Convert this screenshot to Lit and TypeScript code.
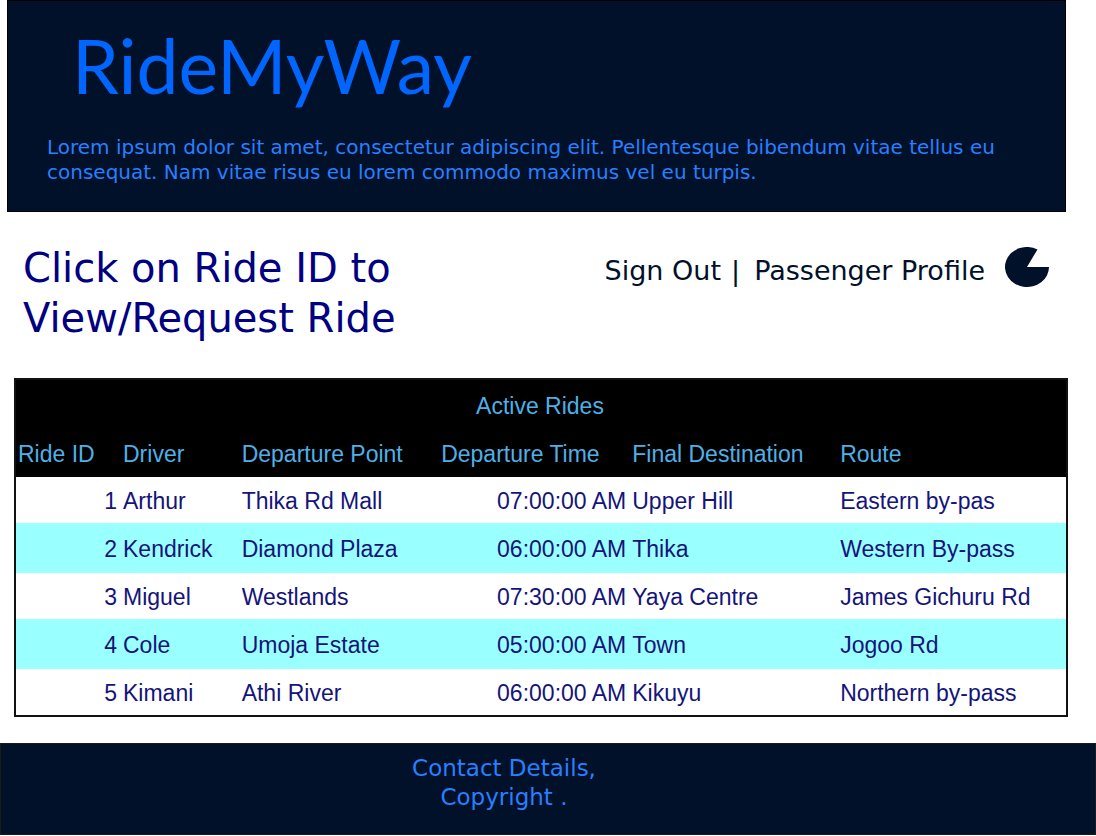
import { LitElement, html, css } from "lit";
import { customElement } from "lit/decorators.js";

interface Ride {
  id: number;
  driver: string;
  from: string;
  time: string;
  to: string;
  route: string;
}

const rides: Ride[] = [
  { id: 1, driver: "Arthur", from: "Thika Rd Mall", time: "07:00:00 AM", to: "Upper Hill", route: "Eastern by-pas" },
  { id: 2, driver: "Kendrick", from: "Diamond Plaza", time: "06:00:00 AM", to: "Thika", route: "Western By-pass" },
  { id: 3, driver: "Miguel", from: "Westlands", time: "07:30:00 AM", to: "Yaya Centre", route: "James Gichuru Rd" },
  { id: 4, driver: "Cole", from: "Umoja Estate", time: "05:00:00 AM", to: "Town", route: "Jogoo Rd" },
  { id: 5, driver: "Kimani", from: "Athi River", time: "06:00:00 AM", to: "Kikuyu", route: "Northern by-pass" },
];

@customElement("rides-table")
export class RidesTable extends LitElement {
  static styles = css`
    :host {
      display: block;
    }
    .rides {
      width: 100%;
      table-layout: fixed;
      border-collapse: separate;
      border-spacing: 0;
      border: 2px solid #111;
      font: 23px/32px "Liberation Sans", Arial, sans-serif;
      color: #14147a;
    }
    .c-id { width: 10%; }
    .c-driver { width: 11.3%; }
    .c-from { width: 19%; }
    .c-time { width: 18.2%; }
    .c-to { width: 19.8%; }
    .head {
      background: #000;
      color: #4fb0e6;
    }
    th,
    td {
      padding: 2px 4px 0 2px;
      font-weight: 400;
      text-align: left;
      white-space: nowrap;
    }
    .head tr { height: 48px; }
    .head .title {
      height: 47px;
      text-align: center;
    }
    .ride { height: 46px; }
    .ride:nth-child(even) {
      height: 50px;
      background: #99ffff;
    }
    .rides .num { text-align: right; }
    .ride a {
      color: inherit;
      text-decoration: none;
    }
  `;

  render() {
    return html`
      <table class="rides">
        <colgroup>
          <col class="c-id" />
          <col class="c-driver" />
          <col class="c-from" />
          <col class="c-time" />
          <col class="c-to" />
          <col />
        </colgroup>
        <thead class="head">
          <tr><th class="title" colspan="6">Active Rides</th></tr>
          <tr>
            <th scope="col">Ride ID</th>
            <th scope="col">Driver</th>
            <th scope="col">Departure Point</th>
            <th scope="col">Departure Time</th>
            <th scope="col">Final Destination</th>
            <th scope="col">Route</th>
          </tr>
        </thead>
        <tbody>
          ${rides.map(
            (r) => html`
              <tr class="ride">
                <td class="num"><a href="#ride-${r.id}">${r.id}</a></td>
                <td>${r.driver}</td>
                <td>${r.from}</td>
                <td class="num">${r.time}</td>
                <td>${r.to}</td>
                <td>${r.route}</td>
              </tr>
            `
          )}
        </tbody>
      </table>
    `;
  }
}

@customElement("app-root")
export class AppRoot extends LitElement {
  static styles = css`
    :host {
      display: block;
      background: #fff;
      font-family: "DejaVu Sans", Verdana, sans-serif;
      color: #001129;
    }
    .banner {
      margin: 0 30px 0 7px;
      padding: 16px 39px 26px;
      border: 1px solid #000;
      background: #001129;
    }
    .brand {
      margin: 0 0 22px 25px;
      font: 400 75px/96px "Trebuchet MS", Lato, sans-serif;
      color: #0066ff;
    }
    .tagline {
      margin: 0;
      font-size: 20px;
      line-height: 25px;
      color: #2a7fff;
    }
    .intro {
      display: flex;
      justify-content: space-between;
      align-items: flex-start;
      padding: 31px 47px 0 23px;
    }
    .prompt {
      margin: 0;
      max-width: 400px;
      font-size: 40px;
      font-weight: 400;
      line-height: 50px;
      color: #000080;
    }
    .account {
      display: flex;
      align-items: center;
      font-size: 27px;
      line-height: 40px;
      padding-top: 4px;
    }
    .account a {
      color: inherit;
      text-decoration: none;
    }
    .bar { margin: 0 14px 0 10px; }
    .avatar {
      display: block;
      width: 44px;
      height: 40px;
      margin: 0 0 8px 20px;
    }
    .list { margin: 35px 28px 26px 14px; }
    .foot {
      padding: 10px 88px 22px 0;
      border: 1px solid #1a1a1a;
      background: #001129;
      color: #2a7fff;
      text-align: center;
      font-size: 23px;
      line-height: 29px;
    }
    .foot p { margin: 0; }
  `;

  render() {
    return html`
      <header class="banner">
        <h1 class="brand">RideMyWay</h1>
        <p class="tagline">
          Lorem ipsum dolor sit amet, consectetur adipiscing elit. Pellentesque bibendum vitae tellus eu
          consequat. Nam vitae risus eu lorem commodo maximus vel eu turpis.
        </p>
      </header>
      <main>
        <section class="intro">
          <h2 class="prompt">Click on Ride ID to View/Request Ride</h2>
          <nav class="account">
            <a href="#sign-out">Sign Out</a>
            <span class="bar">|</span>
            <a href="#profile">Passenger Profile</a>
            <svg class="avatar" viewBox="0 0 44 40" aria-hidden="true">
              <path fill="#001129" d="M22 20H44A22 20 0 1 1 32.500 2.400Z" />
            </svg>
          </nav>
        </section>
        <rides-table class="list"></rides-table>
      </main>
      <footer class="foot">
        <p>Contact Details,</p>
        <p>Copyright .</p>
      </footer>
    `;
  }
}
